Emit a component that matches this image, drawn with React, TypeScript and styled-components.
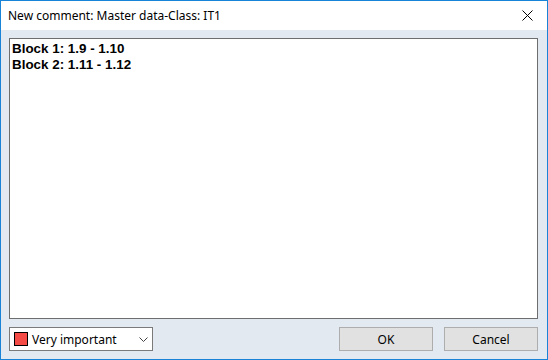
import React from "react";
import styled, { createGlobalStyle } from "styled-components";

const Global = createGlobalStyle`
  html, body { margin: 0; padding: 0; background: #ffffff; }
  * { box-sizing: border-box; }
`;

const Window = styled.div`
  width: 548px;
  height: 360px;
  border: 1px solid #1883d7;
  display: flex;
  flex-direction: column;
  font-family: "Liberation Sans", Arial, sans-serif;
  overflow: hidden;
`;

const TitleBar = styled.div`
  height: 29px;
  background: #ffffff;
  display: flex;
  align-items: center;
  justify-content: space-between;
  padding: 0 0 0 7px;
  flex: none;
`;

const Title = styled.div`
  font-family: "Noto Sans", "Liberation Sans", sans-serif;
  font-size: 12px;
  color: #000000;
  margin-top: -1px;
`;

const CloseButton = styled.div`
  width: 40px;
  height: 29px;
  display: flex;
  align-items: center;
  justify-content: center;
`;

const Body = styled.div`
  flex: 1;
  background: #e3e9f1;
  display: flex;
  flex-direction: column;
  padding: 8px 9px 8px 8px;
  gap: 8px;
`;

const TextArea = styled.div`
  flex: 1;
  background: #ffffff;
  border: 1px solid #6e6e6e;
  padding: 2px 2px;
  font-family: "Liberation Sans", Arial, sans-serif;
  font-weight: bold;
  font-size: 13.4px;
  line-height: 16px;
  color: #000000;
`;

const Footer = styled.div`
  display: flex;
  align-items: center;
  justify-content: space-between;
  height: 24px;
  flex: none;
`;

const Combo = styled.div`
  width: 144px;
  height: 24px;
  background: #ffffff;
  border: 1px solid #7a7a7a;
  display: flex;
  align-items: center;
  padding: 0 0 0 4px;
  gap: 4px;
  font-family: "Noto Sans", "Liberation Sans", sans-serif;
  font-size: 12px;
  color: #000000;
`;

const Swatch = styled.span<{ $color: string }>`
  width: 14px;
  height: 14px;
  border: 1px solid #000000;
  background: ${(p) => p.$color};
  flex: none;
`;

const ComboLabel = styled.span`
  flex: 1;
`;

const Chevron = styled.span`
  width: 18px;
  display: flex;
  align-items: center;
  justify-content: center;
`;

const Buttons = styled.div`
  display: flex;
  gap: 11px;
`;

const Button = styled.div`
  width: 94px;
  height: 24px;
  background: #e1e1e1;
  border: 1px solid #adadad;
  display: flex;
  align-items: center;
  justify-content: center;
  font-family: "Noto Sans", "Liberation Sans", sans-serif;
  font-size: 12px;
  color: #000000;
`;

export default function App() {
  return (
    <>
      <Global />
      <Window>
        <TitleBar>
          <Title>New comment: Master data-Class: IT1</Title>
          <CloseButton>
            <svg width="11" height="11" viewBox="0 0 11 11">
              <path d="M0.5 0.5 L10.5 10.5 M10.5 0.5 L0.5 10.5" stroke="#000" strokeWidth="1" fill="none" />
            </svg>
          </CloseButton>
        </TitleBar>
        <Body>
          <TextArea>
            <div>Block 1: 1.9 - 1.10</div>
            <div>Block 2: 1.11 - 1.12</div>
          </TextArea>
          <Footer>
            <Combo>
              <Swatch $color="#f44b47" />
              <ComboLabel>Very important</ComboLabel>
              <Chevron>
                <svg width="9" height="5" viewBox="0 0 9 5">
                  <path d="M0.5 0.5 L4.5 4.5 L8.5 0.5" stroke="#444" strokeWidth="1" fill="none" />
                </svg>
              </Chevron>
            </Combo>
            <Buttons>
              <Button>OK</Button>
              <Button>Cancel</Button>
            </Buttons>
          </Footer>
        </Body>
      </Window>
    </>
  );
}
